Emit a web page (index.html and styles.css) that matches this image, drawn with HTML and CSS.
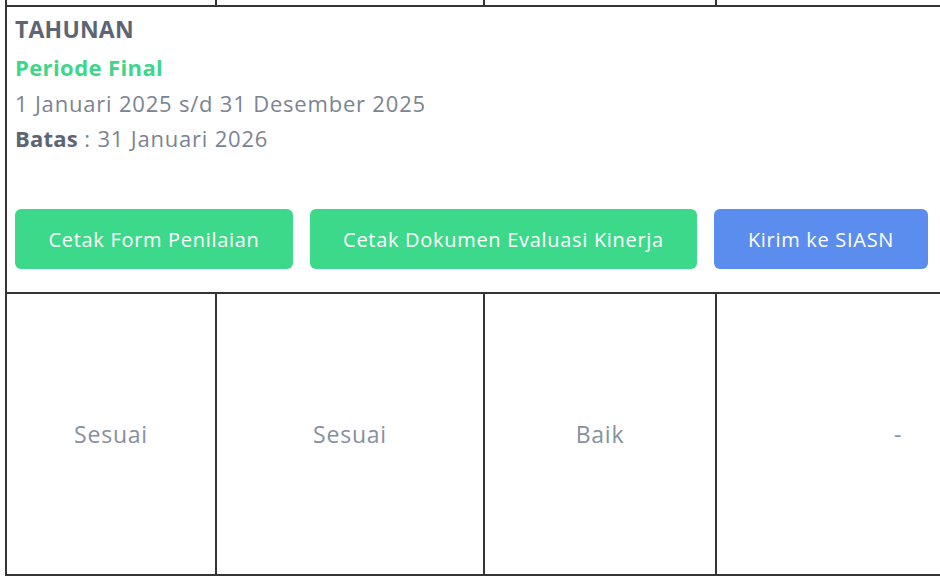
FILE: index.html
```html
<!DOCTYPE html>
<html lang="id">
<head>
<meta charset="utf-8">
<title>Periode Final</title>
<link rel="stylesheet" href="styles.css">
</head>
<body>
<table class="grid">
  <colgroup>
    <col class="c1"><col class="c2"><col class="c3"><col class="c4">
  </colgroup>
  <tr class="prev-row">
    <td></td><td></td><td></td><td></td>
  </tr>
  <tr class="info-row">
    <td colspan="4" class="info">
      <div class="info-text">
        <div class="type">TAHUNAN</div>
        <div class="status">Periode Final</div>
        <div class="range">1 Januari 2025 s/d 31 Desember 2025</div>
        <div class="limit"><b>Batas</b> : 31 Januari 2026</div>
      </div>
      <div class="actions">
        <button class="btn btn-green btn-form">Cetak Form Penilaian</button>
        <button class="btn btn-green btn-doc">Cetak Dokumen Evaluasi Kinerja</button>
        <button class="btn btn-blue btn-send">Kirim ke SIASN</button>
      </div>
    </td>
  </tr>
  <tr class="value-row">
    <td>Sesuai</td>
    <td>Sesuai</td>
    <td>Baik</td>
    <td>-</td>
  </tr>
</table>
</body>
</html>
```

FILE: styles.css
```css
html, body {
  margin: 0;
  padding: 0;
  background: #ffffff;
  overflow: hidden;
}

body {
  width: 940px;
  height: 582px;
  font-family: "Open Sans", "Liberation Sans", sans-serif;
}

.grid {
  border-collapse: collapse;
  table-layout: fixed;
  width: 1074px;
  margin-left: 5px;
}

.c1 { width: 210px; }
.c2 { width: 268px; }
.c3 { width: 232px; }
.c4 { width: 364px; }

.grid td {
  border: 2px solid #353535;
  padding: 0;
}

.prev-row td {
  border-top: none;
  height: 5px;
}

.info {
  padding: 0;
  vertical-align: top;
  height: 285px;
}

.info-text {
  padding: 3px 0 0 8px;
}

.type {
  font-size: 23px;
  font-weight: 700;
  color: #5d6574;
  line-height: 39px;
  letter-spacing: 0.2px;
}

.status {
  font-size: 22px;
  font-weight: 700;
  color: #3dd68a;
  line-height: 36px;
  letter-spacing: 0.4px;
}

.range,
.limit {
  font-size: 22px;
  color: #7b8492;
  line-height: 36px;
  letter-spacing: 0.8px;
}

.limit {
  line-height: 35px;
}

.limit b {
  color: #5d6574;
  font-weight: 700;
  letter-spacing: 0.2px;
}

.actions {
  display: flex;
  gap: 17px;
  padding: 53px 0 0 8px;
}

.btn {
  height: 60px;
  border: none;
  border-radius: 6px;
  color: #ffffff;
  font-family: inherit;
  font-size: 20px;
  letter-spacing: 0.7px;
  padding: 0;
  flex: none;
}

.btn-green { background: #3dd98a; }
.btn-blue { background: #5b8dee; }

.btn-form { width: 278px; }
.btn-doc { width: 387px; }
.btn-send { width: 214px; }

.value-row td {
  height: 280px;
  text-align: center;
  vertical-align: middle;
  font-size: 23px;
  letter-spacing: 0.8px;
  color: #8690a0;
}
```
